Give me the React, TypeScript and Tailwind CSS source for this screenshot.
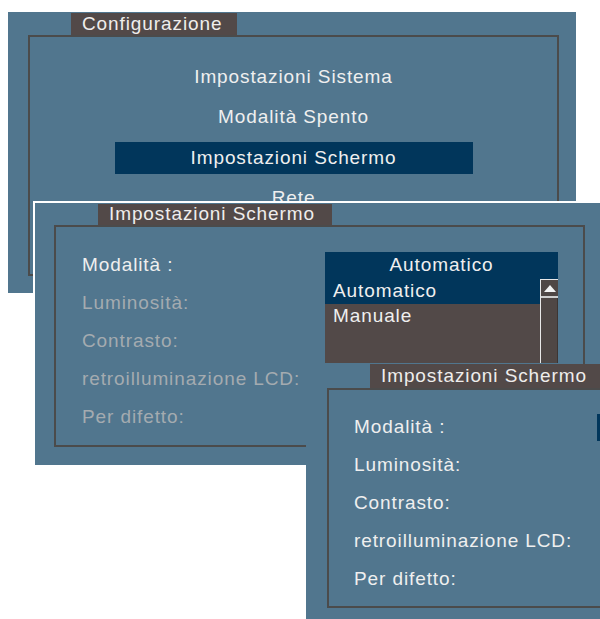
const font = { fontFamily: '"Liberation Sans", Arial, sans-serif' }

const menu = ['Impostazioni Sistema', 'Modalità Spento', 'Impostazioni Schermo', 'Rete']
const fields = ['Modalità :', 'Luminosità:', 'Contrasto:', 'retroilluminazione LCD:', 'Per difetto:']

function Tab({ label, className }: { label: string; className: string }) {
  return (
    <div className={`bg-[#524948] text-[#efedec] pl-[11px] flex items-center whitespace-nowrap ${className}`}>
      {label}
    </div>
  )
}

function ScrollBar() {
  return (
    <div className="w-[18px] flex flex-col border-l border-[#e8e8e8]">
      <div className="h-[17px] border-t border-[#e8e8e8] bg-[#4f4745] flex items-center justify-center">
        <svg width="12" height="7" viewBox="0 0 12 7"><polygon points="6,0 12,7 0,7" fill="#f4f4f4" /></svg>
      </div>
      <div className="h-[2px] bg-[#cfcfcf]" />
      <div className="flex-1 bg-[#4f4745] border-r border-[#3c3533]" />
    </div>
  )
}

function FieldRows({ dim, open }: { dim: boolean; open: boolean }) {
  return (
    <div className="flex flex-col gap-[11px]">
      {fields.map((f, i) => (
        <div key={f} className="flex h-[27px] items-center">
          <div className={`w-[243px] shrink-0 whitespace-nowrap ${dim && i > 0 ? 'text-[#a4abb0]' : 'text-[#efefef]'}`}>{f}</div>
          {i === 0 && (
            <div className="relative w-[233px] h-[27px] shrink-0 bg-[#01365b] text-[#efefef] flex items-center justify-center">
              {open && 'Automatico'}
              {open && (
                <div className="absolute left-0 top-[27px] w-[233px] h-[84px] flex bg-[#524948]">
                  <div className="flex-1 flex flex-col">
                    <div className="h-[25px] bg-[#01365b] pl-[8px] flex items-center">Automatico</div>
                    <div className="h-[25px] pl-[8px] flex items-center">Manuale</div>
                  </div>
                  <ScrollBar />
                </div>
              )}
            </div>
          )}
        </div>
      ))}
    </div>
  )
}

export default function App() {
  return (
    <div className="relative w-[600px] h-[619px] overflow-hidden bg-white text-[19px] tracking-[0.9px]" style={font}>
      {/* Configurazione */}
      <div className="absolute left-[8px] top-[12px] w-[568px] h-[281px] bg-[#51768e] pt-[1px]">
        <Tab label="Configurazione" className="ml-[63px] w-[166px] h-[22px]" />
        <div className="ml-[20px] w-[531px] h-[241px] border-2 border-[#4b4b4b] pt-[24px] flex flex-col items-center gap-[8.5px]">
          {menu.map((m, i) => (
            <div key={m} className={`h-[32px] flex items-center justify-center text-[#efefef] ${i === 2 ? 'w-[358px] bg-[#01365b]' : ''}`}>
              {m}
            </div>
          ))}
        </div>
      </div>

      {/* Impostazioni Schermo (dropdown open) */}
      <div className="absolute left-[33px] top-[201px] w-[600px] h-[264px] bg-[#51768e] border-l-2 border-t-2 border-white pt-[1px]">
        <Tab label="Impostazioni Schermo" className="ml-[63px] w-[234px] h-[21px]" />
        <div className="ml-[19px] w-[531px] h-[222px] border-2 border-[#4b4b4b] pt-[25px] pl-[26px]">
          <FieldRows dim open />
        </div>
      </div>

      {/* Impostazioni Schermo */}
      <div className="absolute left-[306px] top-[364px] w-[320px] h-[270px] bg-[#51768e]">
        <Tab label="Impostazioni Schermo" className="ml-[64px] w-[256px] h-[24px]" />
        <div className="ml-[21px] w-[320px] h-[220px] border-2 border-[#4b4b4b] pt-[24px] pl-[25px]">
          <FieldRows dim={false} open={false} />
        </div>
      </div>
    </div>
  )
}
